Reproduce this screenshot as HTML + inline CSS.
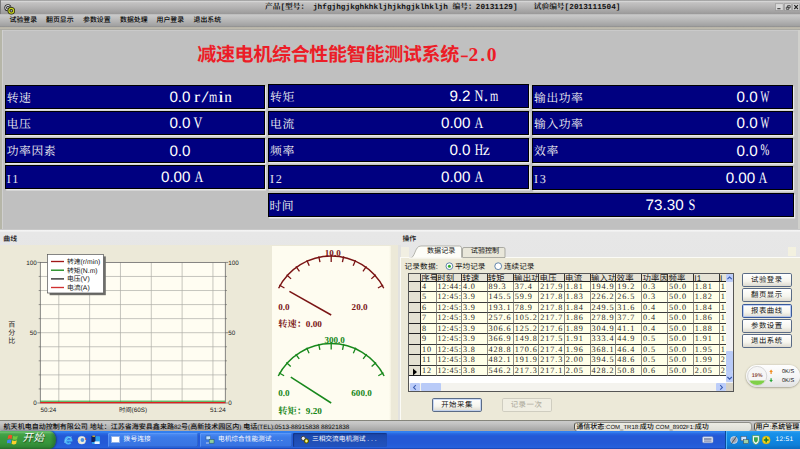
<!DOCTYPE html>
<html lang="zh-CN">
<head>
<meta charset="utf-8">
<title>减速电机综合性能智能测试系统-2.0</title>
<style>
*{box-sizing:border-box;margin:0;padding:0}
html,body{width:800px;height:449px;overflow:hidden;background:#c0c0c0}
body{position:relative;text-rendering:geometricPrecision;font-family:"Liberation Serif","Noto Serif CJK SC",serif;font-size:7px;color:#000}
.abs{position:absolute}
.t{position:absolute;white-space:nowrap;line-height:1}
.song{font-family:"Liberation Serif","Noto Serif CJK SC",serif}
.hei{font-family:"Liberation Sans","Noto Sans CJK SC",sans-serif}
#titlebar{left:0;top:0;width:800px;height:14.4px;border-left:1px solid #7c7c7c;background:linear-gradient(#a4a4a4 0,#a8a8a8 .7px,#d8d8d8 1.1px,#d2d2d2 1.9px,#c3c2c2 2.6px,#b5b4b4 7px,#a2a1a1 12px,#9a9999 13.8px,#a2a2a2 14.4px)}
#menubar{left:0;top:14.4px;width:800px;height:12.8px;background:linear-gradient(#b4b4b4 0,#c9c9c9 1px,#c3c3c3 3px,#b2b2b2 7.500px,#a2a2a2 11.500px,#909090 12.800px)}
#menuline{left:0;top:27.2px;width:800px;height:3.500px;background:linear-gradient(#b2aea2 0,#c2beb0 1.200px,#b0aea6 2.200px,#a8a8a2 2.700px,#cecece 2.900px,#cacaca 3.500px)}
#leftedge{left:0;top:30px;width:2.6px;height:199.500px;background:linear-gradient(90deg,#b6b6a8 0,#b6b6a8 1.800px,#d0d0d0 1.900px,#d0d0d0 2.600px)}
#rightedge{left:798px;top:30px;width:2px;height:200px;background:#d0d0cc}
.menu{top:17.9px;font-size:6.9px;color:#000;font-weight:500;font-family:"Liberation Sans","Noto Sans CJK SC",sans-serif}
.bp{position:absolute;background:#000080;border:1px solid #000;box-shadow:1.200px 1.500px 0 #e9e9e9;height:24.3px}
.bl{position:absolute;left:.8px;top:6.8px;color:#f4f4f4;font-size:11.8px;line-height:1;white-space:nowrap;letter-spacing:.5px}
.bv{position:absolute;top:4.4px;color:#fff;font-family:"Liberation Sans",sans-serif;font-size:15.2px;line-height:1;white-space:nowrap;text-align:right}
.bu{position:absolute;top:4.2px;color:#fff;font-family:"Liberation Serif",serif;font-size:16px;line-height:1;white-space:nowrap}
.bu span{display:inline-block;width:16px;margin:0 -4.1px;text-align:center;transform:scaleX(.77)}

#lowhdr{left:0;top:229.8px;width:800px;height:27.4px;background:linear-gradient(#f5f5f5 0,#f2f2f2 1.2px,#e7e7e7 2.4px,#e6e6e6 27px)}
#lowhdrL{left:0;top:244.5px;width:397.6px;height:1.2px;background:#cbcbc0}
#lowhdrline{left:0;top:229px;width:800px;height:1px;background:#c8c8c8}
#curvebg{left:0;top:245.3px;width:397.6px;height:175px;background:#ece9d8}
#plot{left:40.3px;top:262.4px;width:185px;height:140.6px;background:#fffdf2}
#gaugebg{left:271.5px;top:245.6px;width:119.3px;height:174px;background:linear-gradient(90deg,#fefcf0 0,#fefcf0 117px,#f3f0df 119.3px)}
#midgap{left:397.6px;top:245px;width:3px;height:175px;background:#e2e2e0}
.ax{font-family:"Liberation Sans","Noto Sans CJK SC",sans-serif;font-size:6.6px;color:#222}
.g1{font-family:"Liberation Serif","Noto Serif CJK SC",serif;font-weight:700;font-size:9.1px;color:#7a1616}
.g2{font-family:"Liberation Serif","Noto Serif CJK SC",serif;font-weight:700;font-size:9.1px;color:#168616}


#tabpage{left:400px;top:257px;width:400px;height:163px;background:#ece9d8;border-top:1px solid #fbfbf6;border-left:1px solid #fbfbf6}
.tab{position:absolute;font-family:"Liberation Sans","Noto Sans CJK SC",sans-serif;font-size:7.1px;font-weight:400;color:#111;text-align:center;line-height:1}
#grid{left:408px;top:272.6px;width:325.5px;height:119.3px;background:#fff;border:1px solid #555;overflow:hidden}
.gh{position:absolute;top:0;height:8.4px;background:#e6e3d6;border-right:.9px solid #333;border-bottom:.9px solid #222;font-family:"Liberation Sans","Noto Sans CJK SC",sans-serif;font-size:8.4px;line-height:8.8px;white-space:nowrap;overflow:hidden;font-weight:400;color:#1a1a1a;padding-left:.3px;letter-spacing:.2px}
.gc{position:absolute;height:10.5px;background:#ffffe8;border-right:.8px solid #8c8c86;border-bottom:.9px solid #3a3a3a;font-family:"Liberation Serif",serif;font-size:8.2px;line-height:10.7px;white-space:nowrap;overflow:hidden;color:#2a2a2a;padding-left:.9px;letter-spacing:.92px}
.gi{position:absolute;left:0;width:12px;height:10.5px;background:#e4e1d2;border-right:1px solid #222;border-bottom:1px solid #222}
.btn{position:absolute;width:50px;height:14px;border:1px solid #5a6b86;border-radius:1.8px;background:linear-gradient(#ffffff,#f6f5ee 60%,#dddad0);font-family:"Liberation Sans","Noto Sans CJK SC",sans-serif;font-size:7.4px;font-weight:400;line-height:12px;text-align:center;color:#111;letter-spacing:.5px}


#statusbar{left:0;top:420px;width:800px;height:11.300px;background:linear-gradient(#7e7e74 0,#8a8a82 .9px,#c9c9c9 1.5px,#c4c4c4 3.5px,#b0b0b0 8px,#a6a6a6 10.2px,#beb0a8 11.300px)}
.sp{position:absolute;top:422.1px;height:8.9px;border-left:1px solid #4e4e48;border-top:.6px solid #8e8e88;border-right:.6px solid #9a9a94;border-radius:3.5px;background:linear-gradient(#ecece4,#deded6)}
.st{font-family:"Liberation Sans","Noto Sans CJK SC",sans-serif;font-size:7.02px;color:#0a0a0a;font-weight:500}
.l{font-size:6.35px}
.l2{font-size:6px}
#taskbar{left:0;top:431.3px;width:800px;height:17.7px;background:linear-gradient(#2f7cf0 0,#3484f2 1.2px,#2a68e2 2.6px,#2459d6 5px,#2459d6 12px,#2660dc 16.500px,#1c46b4 17.700px)}
#start{left:0;top:431.3px;width:56px;height:17.7px;border-radius:0 6px 6px 0/0 9px 9px 0;background:linear-gradient(90deg,rgba(0,0,0,0) 0,rgba(0,0,0,0) 50px,rgba(20,70,30,.45) 56px),linear-gradient(#4fae55 0,#6cc070 1.2px,#45a349 3px,#3a9a3e 7px,#37963b 12px,#2f8634 16px,#276e2c 17.700px);box-shadow:1px 0 1.5px #1a3e8a}
.tb{position:absolute;top:432.6px;height:14.6px;border-radius:1.6px;background:linear-gradient(#4f8ff6,#3c7be8 30%,#3773e2);box-shadow:inset .6px .6px 0 #6aa2fa,inset -.6px -.6px 0 #2a5cc0}
.tba{background:linear-gradient(#1a44a6,#1e4cb4 40%,#2253be);box-shadow:inset .8px .8px 1px #12317e}
.tt{font-family:"Liberation Sans","Noto Sans CJK SC",sans-serif;font-size:6.7px;color:#fff}
#tray{left:724.5px;top:431px;width:75.5px;height:18px;background:linear-gradient(#3aa4f4 0,#1a92ea 2px,#1188e4 8px,#0f7fd8 14px,#0c6cc0 18px);border-left:1px solid #0b4a9a;box-shadow:inset 1px 0 0 #4fb4f8}

</style>
</head>
<body>
<div id="titlebar" class="abs"></div>
<div id="menubar" class="abs"></div>
<div id="menuline" class="abs"></div>
<div id="leftedge" class="abs"></div>
<div id="rightedge" class="abs"></div>
<svg class="abs" style="left:4.4px;top:3.8px" width="12" height="11" viewBox="0 0 12 11">
<circle cx="3.9" cy="3.7" r="2.3" fill="none" stroke="#2a2a2a" stroke-width="2.5"/><circle cx="3.9" cy="3.7" r="2.3" fill="none" stroke="#e6e6e6" stroke-width="1"/>
<circle cx="7.300" cy="6.700" r="2.400" fill="none" stroke="#26260a" stroke-width="2.700"/><circle cx="7.300" cy="6.700" r="2.400" fill="none" stroke="#c6d422" stroke-width="1.200"/>
<path d="M5.200 2.200l1.300 1.700" stroke="#4a4a4a" stroke-width=".8"/>
</svg>
<div class="t" id="titletext" style="left:265px;top:5.2px;font-family:'Liberation Mono','Noto Serif CJK SC',monospace;font-size:7.7px;font-weight:700;color:#111;letter-spacing:.04px">产品[型号： jhfgjhgjkghkhkljhjkhgjklhkljh 编号：20131129]</div>
<div class="t" id="titletext2" style="left:533.7px;top:5.2px;font-family:'Liberation Mono','Noto Serif CJK SC',monospace;font-size:7.7px;font-weight:700;color:#111;letter-spacing:.04px">试验编号[2013111504]</div>
<svg class="abs" style="left:775px;top:3px" width="25" height="8" viewBox="775 3 25 8">
<rect x="775.700" y="3.800" width="7.400" height="6.400" fill="#dadada" stroke="#8e8e8e" stroke-width=".5"/><rect x="784.700" y="3.800" width="6.800" height="6.400" fill="#d4d4d4" stroke="#8e8e8e" stroke-width=".5"/><rect x="792.800" y="3.800" width="6.400" height="6.400" fill="#d4d4d4" stroke="#8e8e8e" stroke-width=".5"/>
<path d="M777.300 8.700h3.200" stroke="#333" stroke-width="1.100"/><path d="M787.600 5.600h2.600v2.200h-2.600zM786.300 7.100h2.600v2.200h-2.600z" fill="none" stroke="#333" stroke-width=".8"/><path d="M794.300 5.200l3.600 3.800M797.900 5.200l-3.600 3.800" stroke="#222" stroke-width="1.100"/></svg>
<div class="t menu song" style="left:9.5px">试验登录</div>
<div class="t menu song" style="left:46px">翻页显示</div>
<div class="t menu song" style="left:83px">参数设置</div>
<div class="t menu song" style="left:120px">数据处理</div>
<div class="t menu song" style="left:156.5px">用户登录</div>
<div class="t menu song" style="left:193.5px">退出系统</div>
<div class="t hei" id="heading" style="left:197.2px;top:45.9px;font-size:19.1px;font-weight:700;color:#ec1d27;letter-spacing:-.4px">减速电机综合性能智能测试系统<span style="font-family:'Liberation Serif',serif;font-size:19.6px;letter-spacing:-.45px"><span style="display:inline-block;transform:scaleX(1.35);margin:0 1.6px 0 1.9px">-</span>2<span style="margin:0 2.2px 0 2.4px">.</span>0</span></div>
<div class="bp" style="left:5px;top:84.8px;width:260.4px"><div class="bl song">转速</div><div class="bv" style="right:73.89999999999998px">0.0</div><div class="bu" style="left:187.3px"><span style="transform:scaleX(1.15)">r</span><span style="transform:scaleX(1.6)">/</span><span style="transform:scaleX(0.66)">m</span><span style="transform:scaleX(1.45)">i</span><span style="transform:scaleX(0.95)">n</span></div></div>
<div class="bp" style="left:268.3px;top:84.0px;width:260.6px"><div class="bl song">转矩</div><div class="bv" style="right:57.40000000000009px">9.2</div><div class="bu" style="left:205.3px"><span style="transform:scaleX(0.76)">N</span><span style="transform:scaleX(1.1)">.</span><span style="transform:scaleX(0.66)">m</span></div></div>
<div class="bp" style="left:532.3px;top:84.8px;width:260.4px"><div class="bl song">输出功率</div><div class="bv" style="right:34.09999999999991px">0.0</div><div class="bu" style="left:228.0px"><span style="transform:scaleX(0.58)">W</span></div></div>
<div class="bp" style="left:5px;top:111.1px;width:260.4px"><div class="bl song">电压</div><div class="bv" style="right:73.89999999999998px">0.0</div><div class="bu" style="left:188.0px"><span style="transform:scaleX(0.76)">V</span></div></div>
<div class="bp" style="left:268.3px;top:111.1px;width:260.6px"><div class="bl song">电流</div><div class="bv" style="right:57.40000000000009px">0.00</div><div class="bu" style="left:205.9px"><span style="transform:scaleX(0.76)">A</span></div></div>
<div class="bp" style="left:532.3px;top:111.1px;width:260.4px"><div class="bl song">输入功率</div><div class="bv" style="right:34.09999999999991px">0.0</div><div class="bu" style="left:228.0px"><span style="transform:scaleX(0.58)">W</span></div></div>
<div class="bp" style="left:5px;top:138.3px;width:260.4px"><div class="bl song">功率因素</div><div class="bv" style="right:73.89999999999998px">0.0</div></div>
<div class="bp" style="left:268.3px;top:137.8px;width:260.6px"><div class="bl song">频率</div><div class="bv" style="right:57.40000000000009px">0.0</div><div class="bu" style="left:205.3px"><span style="transform:scaleX(0.72)">H</span><span style="transform:scaleX(1.0)">z</span></div></div>
<div class="bp" style="left:532.3px;top:138.3px;width:260.4px"><div class="bl song">效率</div><div class="bv" style="right:34.09999999999991px">0.0</div><div class="bu" style="left:228.0px"><span style="transform:scaleX(0.66)">%</span></div></div>
<div class="bp" style="left:5px;top:165.0px;width:260.4px"><div class="bl song" style="letter-spacing:1.5px;font-size:12.2px;color:#e4e4ec">I1</div><div class="bv" style="right:73.89999999999998px">0.00</div><div class="bu" style="left:189.0px"><span style="transform:scaleX(0.76)">A</span></div></div>
<div class="bp" style="left:268.3px;top:165.0px;width:260.6px"><div class="bl song" style="letter-spacing:1.5px;font-size:12.2px;color:#e4e4ec">I2</div><div class="bv" style="right:57.40000000000009px">0.00</div><div class="bu" style="left:205.9px"><span style="transform:scaleX(0.76)">A</span></div></div>
<div class="bp" style="left:532.3px;top:165.6px;width:260.4px"><div class="bl song" style="letter-spacing:1.5px;font-size:12.2px;color:#e4e4ec">I3</div><div class="bv" style="right:36.499999999999886px">0.00</div><div class="bu" style="left:225.7px"><span style="transform:scaleX(0.76)">A</span></div></div>
<div class="bp" style="left:267.6px;top:192.9px;width:526px"><div class="bl song">时间</div><div class="bv" style="right:109px">73.30</div><div class="bu" style="left:419.8px"><span>S</span></div></div>
<div id="lowhdrline" class="abs"></div><div id="lowhdr" class="abs"></div><div id="lowhdrL" class="abs"></div>
<div id="curvebg" class="abs"></div><div id="midgap" class="abs"></div>
<div class="t hei" style="left:3.3px;top:236.5px;font-size:6.9px;font-weight:500;color:#111">曲线</div>
<div class="t hei" style="left:402.4px;top:236.7px;font-size:6.9px;font-weight:500;color:#111">操作</div>
<svg class="abs" style="left:0;top:245px" width="270" height="175" viewBox="0 245 270 175">
<rect x="40.3" y="262.4" width="185.0" height="140.6" fill="#fffdf2"/>
<line x1="40.3" y1="276.46" x2="225.3" y2="276.46" stroke="#aeaea8" stroke-width=".7"/>
<line x1="40.3" y1="290.52" x2="225.3" y2="290.52" stroke="#aeaea8" stroke-width=".7"/>
<line x1="40.3" y1="304.58" x2="225.3" y2="304.58" stroke="#aeaea8" stroke-width=".7"/>
<line x1="40.3" y1="318.64" x2="225.3" y2="318.64" stroke="#aeaea8" stroke-width=".7"/>
<line x1="40.3" y1="332.70" x2="225.3" y2="332.70" stroke="#aeaea8" stroke-width=".7"/>
<line x1="40.3" y1="346.76" x2="225.3" y2="346.76" stroke="#aeaea8" stroke-width=".7"/>
<line x1="40.3" y1="360.82" x2="225.3" y2="360.82" stroke="#aeaea8" stroke-width=".7"/>
<line x1="40.3" y1="374.88" x2="225.3" y2="374.88" stroke="#aeaea8" stroke-width=".7"/>
<line x1="40.3" y1="388.94" x2="225.3" y2="388.94" stroke="#aeaea8" stroke-width=".7"/>
<line x1="58.80" y1="262.4" x2="58.80" y2="403.0" stroke="#aeaea8" stroke-width=".7"/>
<line x1="89.63" y1="262.4" x2="89.63" y2="403.0" stroke="#aeaea8" stroke-width=".7"/>
<line x1="120.46" y1="262.4" x2="120.46" y2="403.0" stroke="#aeaea8" stroke-width=".7"/>
<line x1="151.29" y1="262.4" x2="151.29" y2="403.0" stroke="#aeaea8" stroke-width=".7"/>
<line x1="182.12" y1="262.4" x2="182.12" y2="403.0" stroke="#aeaea8" stroke-width=".7"/>
<line x1="212.95" y1="262.4" x2="212.95" y2="403.0" stroke="#aeaea8" stroke-width=".7"/>
<rect x="40.3" y="262.4" width="185.0" height="140.6" fill="none" stroke="#6a6a6a" stroke-width=".8"/>
<line x1="37.3" y1="262.40" x2="40.3" y2="262.40" stroke="#555" stroke-width=".6"/>
<line x1="225.3" y1="262.40" x2="228.3" y2="262.40" stroke="#555" stroke-width=".6"/>
<line x1="38.699999999999996" y1="276.46" x2="40.3" y2="276.46" stroke="#555" stroke-width=".6"/>
<line x1="225.3" y1="276.46" x2="226.9" y2="276.46" stroke="#555" stroke-width=".6"/>
<line x1="38.699999999999996" y1="290.52" x2="40.3" y2="290.52" stroke="#555" stroke-width=".6"/>
<line x1="225.3" y1="290.52" x2="226.9" y2="290.52" stroke="#555" stroke-width=".6"/>
<line x1="38.699999999999996" y1="304.58" x2="40.3" y2="304.58" stroke="#555" stroke-width=".6"/>
<line x1="225.3" y1="304.58" x2="226.9" y2="304.58" stroke="#555" stroke-width=".6"/>
<line x1="38.699999999999996" y1="318.64" x2="40.3" y2="318.64" stroke="#555" stroke-width=".6"/>
<line x1="225.3" y1="318.64" x2="226.9" y2="318.64" stroke="#555" stroke-width=".6"/>
<line x1="37.3" y1="332.70" x2="40.3" y2="332.70" stroke="#555" stroke-width=".6"/>
<line x1="225.3" y1="332.70" x2="228.3" y2="332.70" stroke="#555" stroke-width=".6"/>
<line x1="38.699999999999996" y1="346.76" x2="40.3" y2="346.76" stroke="#555" stroke-width=".6"/>
<line x1="225.3" y1="346.76" x2="226.9" y2="346.76" stroke="#555" stroke-width=".6"/>
<line x1="38.699999999999996" y1="360.82" x2="40.3" y2="360.82" stroke="#555" stroke-width=".6"/>
<line x1="225.3" y1="360.82" x2="226.9" y2="360.82" stroke="#555" stroke-width=".6"/>
<line x1="38.699999999999996" y1="374.88" x2="40.3" y2="374.88" stroke="#555" stroke-width=".6"/>
<line x1="225.3" y1="374.88" x2="226.9" y2="374.88" stroke="#555" stroke-width=".6"/>
<line x1="38.699999999999996" y1="388.94" x2="40.3" y2="388.94" stroke="#555" stroke-width=".6"/>
<line x1="225.3" y1="388.94" x2="226.9" y2="388.94" stroke="#555" stroke-width=".6"/>
<line x1="37.3" y1="403.00" x2="40.3" y2="403.00" stroke="#555" stroke-width=".6"/>
<line x1="225.3" y1="403.00" x2="228.3" y2="403.00" stroke="#555" stroke-width=".6"/>
<line x1="40.3" y1="401.2" x2="225.3" y2="401.2" stroke="#1f9a2a" stroke-width="1"/>
<line x1="40.3" y1="402.6" x2="225.3" y2="402.6" stroke="#e02020" stroke-width="1.1"/>
<rect x="49.600" y="256.400" width="56.200" height="38.800" fill="#6e6e6a"/>
<rect x="47.400" y="254.400" width="56.100" height="38.600" fill="#fff" stroke="#555" stroke-width=".7"/>
<line x1="51" y1="261.5" x2="64" y2="261.5" stroke="#a01818" stroke-width="1.35"/>
<text x="67" y="263.9" font-family="Liberation Sans,Noto Sans CJK SC,sans-serif" font-size="6.8" fill="#111">转速(r/min)</text>
<line x1="51" y1="270.2" x2="64" y2="270.2" stroke="#1a8a1a" stroke-width="1.35"/>
<text x="67" y="272.6" font-family="Liberation Sans,Noto Sans CJK SC,sans-serif" font-size="6.8" fill="#111">转矩(N.m)</text>
<line x1="51" y1="278.9" x2="64" y2="278.9" stroke="#2a2a2a" stroke-width="1.35"/>
<text x="67" y="281.3" font-family="Liberation Sans,Noto Sans CJK SC,sans-serif" font-size="6.8" fill="#111">电压(V)</text>
<line x1="51" y1="287.5" x2="64" y2="287.5" stroke="#d03030" stroke-width="1.35"/>
<text x="67" y="289.9" font-family="Liberation Sans,Noto Sans CJK SC,sans-serif" font-size="6.8" fill="#111">电流(A)</text>
<text x="36.8" y="264.8" text-anchor="end" font-family="Liberation Sans,Noto Sans CJK SC,sans-serif" font-size="6.3" fill="#222">100</text>
<text x="36.8" y="335.1" text-anchor="end" font-family="Liberation Sans,Noto Sans CJK SC,sans-serif" font-size="6.3" fill="#222">50</text>
<text x="36.8" y="405.4" text-anchor="end" font-family="Liberation Sans,Noto Sans CJK SC,sans-serif" font-size="6.3" fill="#222">0</text>
<text x="228.3" y="264.8" text-anchor="start" font-family="Liberation Sans,Noto Sans CJK SC,sans-serif" font-size="6.3" fill="#222">100</text>
<text x="228.3" y="335.1" text-anchor="start" font-family="Liberation Sans,Noto Sans CJK SC,sans-serif" font-size="6.3" fill="#222">50</text>
<text x="228.3" y="405.4" text-anchor="start" font-family="Liberation Sans,Noto Sans CJK SC,sans-serif" font-size="6.3" fill="#222">0</text>
<text x="40.5" y="412.4" text-anchor="start" font-family="Liberation Sans,Noto Sans CJK SC,sans-serif" font-size="6.3" fill="#222">50:24</text>
<text x="210" y="412.4" text-anchor="start" font-family="Liberation Sans,Noto Sans CJK SC,sans-serif" font-size="6.3" fill="#222">51:24</text>
<text x="133" y="412.4" text-anchor="middle" font-family="Liberation Sans,Noto Sans CJK SC,sans-serif" font-size="6.3" fill="#222">时间(60S)</text>
<text x="8.3" y="327" font-family="Liberation Sans,Noto Sans CJK SC,sans-serif" font-size="7" fill="#222">百<tspan x="8.3" dy="8.2">分</tspan><tspan x="8.3" dy="8.2">比</tspan></text>
</svg>
<div id="gaugebg" class="abs"></div>
<svg class="abs" style="left:271px;top:245.3px" width="121" height="100" viewBox="271 245.3 121 100">
<path d="M278.63 288.51A59 59 0 0 1 383.77 288.51" fill="none" stroke="#7a1414" stroke-width="1.45"/>
<line x1="279.24" y1="285.30" x2="284.43" y2="288.30" stroke="#7a1414" stroke-width="1.3"/>
<line x1="286.61" y1="275.15" x2="291.07" y2="279.17" stroke="#7a1414" stroke-width="1.3"/>
<line x1="295.93" y1="266.76" x2="299.46" y2="271.61" stroke="#7a1414" stroke-width="1.3"/>
<line x1="306.80" y1="260.49" x2="309.24" y2="265.97" stroke="#7a1414" stroke-width="1.3"/>
<line x1="318.73" y1="256.61" x2="319.97" y2="262.48" stroke="#7a1414" stroke-width="1.3"/>
<line x1="331.20" y1="254.80" x2="331.20" y2="262.30" stroke="#7a1414" stroke-width="1.3"/>
<line x1="343.67" y1="256.61" x2="342.43" y2="262.48" stroke="#7a1414" stroke-width="1.3"/>
<line x1="355.60" y1="260.49" x2="353.16" y2="265.97" stroke="#7a1414" stroke-width="1.3"/>
<line x1="366.47" y1="266.76" x2="362.94" y2="271.61" stroke="#7a1414" stroke-width="1.3"/>
<line x1="375.79" y1="275.15" x2="371.33" y2="279.17" stroke="#7a1414" stroke-width="1.3"/>
<line x1="383.16" y1="285.30" x2="377.97" y2="288.30" stroke="#7a1414" stroke-width="1.3"/>
<line x1="331.20" y1="315.30" x2="289.42" y2="291.66" stroke="#7a1414" stroke-width="1.5"/>
</svg>
<svg class="abs" style="left:271px;top:332.8px" width="121" height="100" viewBox="271 332.8 121 100">
<path d="M278.27 375.83A59.4 59.4 0 0 1 384.13 375.83" fill="none" stroke="#18881c" stroke-width="1.45"/>
<line x1="278.89" y1="372.60" x2="284.09" y2="375.60" stroke="#18881c" stroke-width="1.3"/>
<line x1="286.31" y1="362.38" x2="290.77" y2="366.40" stroke="#18881c" stroke-width="1.3"/>
<line x1="295.70" y1="353.94" x2="299.22" y2="358.79" stroke="#18881c" stroke-width="1.3"/>
<line x1="306.63" y1="347.62" x2="309.07" y2="353.10" stroke="#18881c" stroke-width="1.3"/>
<line x1="318.64" y1="343.72" x2="319.89" y2="349.59" stroke="#18881c" stroke-width="1.3"/>
<line x1="331.20" y1="341.90" x2="331.20" y2="349.40" stroke="#18881c" stroke-width="1.3"/>
<line x1="343.76" y1="343.72" x2="342.51" y2="349.59" stroke="#18881c" stroke-width="1.3"/>
<line x1="355.77" y1="347.62" x2="353.33" y2="353.10" stroke="#18881c" stroke-width="1.3"/>
<line x1="366.70" y1="353.94" x2="363.18" y2="358.79" stroke="#18881c" stroke-width="1.3"/>
<line x1="376.09" y1="362.38" x2="371.63" y2="366.40" stroke="#18881c" stroke-width="1.3"/>
<line x1="383.51" y1="372.60" x2="378.31" y2="375.60" stroke="#18881c" stroke-width="1.3"/>
<line x1="331.20" y1="402.80" x2="290.81" y2="376.87" stroke="#18881c" stroke-width="1.5"/>
</svg>
<div class="t g1" style="left:324.8px;top:248.9px">10.0</div><div class="t g1" style="left:278.2px;top:302.6px">0.0</div><div class="t g1" style="left:351.6px;top:302.6px">20.0</div><div class="t g1" style="left:278.3px;top:320.3px;font-size:9.2px">转速：0.00</div>
<div class="t g2" style="left:324.4px;top:335.9px">300.0</div><div class="t g2" style="left:278.2px;top:389.3px">0.0</div><div class="t g2" style="left:351.3px;top:389.3px">600.0</div><div class="t g2" style="left:278.3px;top:406.9px;font-size:9.2px">转矩：9.20</div>
<div id="tabpage" class="abs"></div>
<svg class="abs" style="left:405px;top:245px" width="105" height="14" viewBox="405 245 105 14"><path d="M462.5 257.5V249q0-1.5 1.5-1.5H503.5q1.5 0 1.5 1.5V257.5Z" fill="#e9e7da" stroke="#8f8f86" stroke-width=".7"/><path d="M409 258.5C416 258.5 414 246 421 246H459.5q2 0 2 2V258.5Z" fill="#fdfdf8" stroke="#9a9a90" stroke-width=".7"/><rect x="409" y="257.6" width="53.2" height="1.6" fill="#f4f3ea"/></svg>
<div class="abs" style="left:400.5px;top:246.5px;width:8px;height:10.5px;background:#f1efe2"></div>
<div class="tab" style="left:421.2px;top:247.8px;width:40px">数据记录</div><div class="tab" style="left:465px;top:248.4px;width:40px">试验控制</div>
<div class="abs" style="left:788px;top:247px;width:8px;height:9px;background:#f3f1e0"></div>
<div class="t hei" style="left:404.5px;top:262.6px;font-size:7.6px;color:#111;letter-spacing:.2px">记录数据:</div>
<svg class="abs" style="left:444px;top:261px" width="60" height="11" viewBox="444 261 60 11"><circle cx="449.4" cy="266.2" r="3.4" fill="#fff" stroke="#3c6a9a" stroke-width=".8"/><circle cx="449.4" cy="266.2" r="1.5" fill="#2faa2a"/><circle cx="498.2" cy="266.2" r="3.4" fill="#fff" stroke="#3c6a9a" stroke-width=".8"/></svg>
<div class="t hei" style="left:455px;top:262.6px;font-size:7.6px;color:#111">平均记录</div><div class="t hei" style="left:504px;top:262.6px;font-size:7.6px;color:#111">连续记录</div>
<div id="grid" class="abs">
<div class="gh" style="left:0;width:12px"></div>
<div class="gh" style="left:12px;width:16.0px">序号</div>
<div class="gh" style="left:28px;width:25.0px">时刻</div>
<div class="gh" style="left:53px;width:25.5px">转速</div>
<div class="gh" style="left:78.5px;width:26.3px">转矩</div>
<div class="gh" style="left:104.8px;width:25.5px">输出功</div>
<div class="gh" style="left:130.3px;width:25.5px">电压</div>
<div class="gh" style="left:155.8px;width:25.8px">电流</div>
<div class="gh" style="left:181.6px;width:25.7px">输入功</div>
<div class="gh" style="left:207.3px;width:25.9px">效率</div>
<div class="gh" style="left:233.2px;width:26.0px">功率因</div>
<div class="gh" style="left:259.2px;width:25.7px">频率</div>
<div class="gh" style="left:284.9px;width:25.9px">I1</div>
<div class="gh" style="left:310.8px;width:6.8px">I</div>
<div class="gi" style="top:8.4px"></div>
<div class="gc" style="top:8.4px;left:12px;width:16.0px">4</div>
<div class="gc" style="top:8.4px;left:28px;width:25.0px;letter-spacing:.5px;padding-left:.5px">12:44:</div>
<div class="gc" style="top:8.4px;left:53px;width:25.5px">4.0</div>
<div class="gc" style="top:8.4px;left:78.5px;width:26.3px">89.3</div>
<div class="gc" style="top:8.4px;left:104.8px;width:25.5px">37.4</div>
<div class="gc" style="top:8.4px;left:130.3px;width:25.5px">217.9</div>
<div class="gc" style="top:8.4px;left:155.8px;width:25.8px">1.81</div>
<div class="gc" style="top:8.4px;left:181.6px;width:25.7px">194.9</div>
<div class="gc" style="top:8.4px;left:207.3px;width:25.9px">19.2</div>
<div class="gc" style="top:8.4px;left:233.2px;width:26.0px">0.3</div>
<div class="gc" style="top:8.4px;left:259.2px;width:25.7px">50.0</div>
<div class="gc" style="top:8.4px;left:284.9px;width:25.9px">1.81</div>
<div class="gc" style="top:8.4px;left:310.8px;width:6.8px">1</div>
<div class="gi" style="top:18.9px"></div>
<div class="gc" style="top:18.9px;left:12px;width:16.0px">5</div>
<div class="gc" style="top:18.9px;left:28px;width:25.0px;letter-spacing:.5px;padding-left:.5px">12:45:</div>
<div class="gc" style="top:18.9px;left:53px;width:25.5px">3.9</div>
<div class="gc" style="top:18.9px;left:78.5px;width:26.3px">145.5</div>
<div class="gc" style="top:18.9px;left:104.8px;width:25.5px">59.9</div>
<div class="gc" style="top:18.9px;left:130.3px;width:25.5px">217.8</div>
<div class="gc" style="top:18.9px;left:155.8px;width:25.8px">1.83</div>
<div class="gc" style="top:18.9px;left:181.6px;width:25.7px">226.2</div>
<div class="gc" style="top:18.9px;left:207.3px;width:25.9px">26.5</div>
<div class="gc" style="top:18.9px;left:233.2px;width:26.0px">0.3</div>
<div class="gc" style="top:18.9px;left:259.2px;width:25.7px">50.0</div>
<div class="gc" style="top:18.9px;left:284.9px;width:25.9px">1.82</div>
<div class="gc" style="top:18.9px;left:310.8px;width:6.8px">1</div>
<div class="gi" style="top:29.4px"></div>
<div class="gc" style="top:29.4px;left:12px;width:16.0px">6</div>
<div class="gc" style="top:29.4px;left:28px;width:25.0px;letter-spacing:.5px;padding-left:.5px">12:45:</div>
<div class="gc" style="top:29.4px;left:53px;width:25.5px">3.9</div>
<div class="gc" style="top:29.4px;left:78.5px;width:26.3px">193.1</div>
<div class="gc" style="top:29.4px;left:104.8px;width:25.5px">78.9</div>
<div class="gc" style="top:29.4px;left:130.3px;width:25.5px">217.8</div>
<div class="gc" style="top:29.4px;left:155.8px;width:25.8px">1.84</div>
<div class="gc" style="top:29.4px;left:181.6px;width:25.7px">249.5</div>
<div class="gc" style="top:29.4px;left:207.3px;width:25.9px">31.6</div>
<div class="gc" style="top:29.4px;left:233.2px;width:26.0px">0.4</div>
<div class="gc" style="top:29.4px;left:259.2px;width:25.7px">50.0</div>
<div class="gc" style="top:29.4px;left:284.9px;width:25.9px">1.84</div>
<div class="gc" style="top:29.4px;left:310.8px;width:6.8px">1</div>
<div class="gi" style="top:39.9px"></div>
<div class="gc" style="top:39.9px;left:12px;width:16.0px">7</div>
<div class="gc" style="top:39.9px;left:28px;width:25.0px;letter-spacing:.5px;padding-left:.5px">12:45:</div>
<div class="gc" style="top:39.9px;left:53px;width:25.5px">3.9</div>
<div class="gc" style="top:39.9px;left:78.5px;width:26.3px">257.6</div>
<div class="gc" style="top:39.9px;left:104.8px;width:25.5px">105.2</div>
<div class="gc" style="top:39.9px;left:130.3px;width:25.5px">217.7</div>
<div class="gc" style="top:39.9px;left:155.8px;width:25.8px">1.86</div>
<div class="gc" style="top:39.9px;left:181.6px;width:25.7px">278.9</div>
<div class="gc" style="top:39.9px;left:207.3px;width:25.9px">37.7</div>
<div class="gc" style="top:39.9px;left:233.2px;width:26.0px">0.4</div>
<div class="gc" style="top:39.9px;left:259.2px;width:25.7px">50.0</div>
<div class="gc" style="top:39.9px;left:284.9px;width:25.9px">1.86</div>
<div class="gc" style="top:39.9px;left:310.8px;width:6.8px">1</div>
<div class="gi" style="top:50.4px"></div>
<div class="gc" style="top:50.4px;left:12px;width:16.0px">8</div>
<div class="gc" style="top:50.4px;left:28px;width:25.0px;letter-spacing:.5px;padding-left:.5px">12:45:</div>
<div class="gc" style="top:50.4px;left:53px;width:25.5px">3.9</div>
<div class="gc" style="top:50.4px;left:78.5px;width:26.3px">306.6</div>
<div class="gc" style="top:50.4px;left:104.8px;width:25.5px">125.2</div>
<div class="gc" style="top:50.4px;left:130.3px;width:25.5px">217.6</div>
<div class="gc" style="top:50.4px;left:155.8px;width:25.8px">1.89</div>
<div class="gc" style="top:50.4px;left:181.6px;width:25.7px">304.9</div>
<div class="gc" style="top:50.4px;left:207.3px;width:25.9px">41.1</div>
<div class="gc" style="top:50.4px;left:233.2px;width:26.0px">0.4</div>
<div class="gc" style="top:50.4px;left:259.2px;width:25.7px">50.0</div>
<div class="gc" style="top:50.4px;left:284.9px;width:25.9px">1.88</div>
<div class="gc" style="top:50.4px;left:310.8px;width:6.8px">1</div>
<div class="gi" style="top:60.9px"></div>
<div class="gc" style="top:60.9px;left:12px;width:16.0px">9</div>
<div class="gc" style="top:60.9px;left:28px;width:25.0px;letter-spacing:.5px;padding-left:.5px">12:45:</div>
<div class="gc" style="top:60.9px;left:53px;width:25.5px">3.9</div>
<div class="gc" style="top:60.9px;left:78.5px;width:26.3px">366.9</div>
<div class="gc" style="top:60.9px;left:104.8px;width:25.5px">149.8</div>
<div class="gc" style="top:60.9px;left:130.3px;width:25.5px">217.5</div>
<div class="gc" style="top:60.9px;left:155.8px;width:25.8px">1.91</div>
<div class="gc" style="top:60.9px;left:181.6px;width:25.7px">333.4</div>
<div class="gc" style="top:60.9px;left:207.3px;width:25.9px">44.9</div>
<div class="gc" style="top:60.9px;left:233.2px;width:26.0px">0.5</div>
<div class="gc" style="top:60.9px;left:259.2px;width:25.7px">50.0</div>
<div class="gc" style="top:60.9px;left:284.9px;width:25.9px">1.91</div>
<div class="gc" style="top:60.9px;left:310.8px;width:6.8px">1</div>
<div class="gi" style="top:71.4px"></div>
<div class="gc" style="top:71.4px;left:12px;width:16.0px">10</div>
<div class="gc" style="top:71.4px;left:28px;width:25.0px;letter-spacing:.5px;padding-left:.5px">12:45:</div>
<div class="gc" style="top:71.4px;left:53px;width:25.5px">3.8</div>
<div class="gc" style="top:71.4px;left:78.5px;width:26.3px">428.8</div>
<div class="gc" style="top:71.4px;left:104.8px;width:25.5px">170.6</div>
<div class="gc" style="top:71.4px;left:130.3px;width:25.5px">217.4</div>
<div class="gc" style="top:71.4px;left:155.8px;width:25.8px">1.96</div>
<div class="gc" style="top:71.4px;left:181.6px;width:25.7px">368.1</div>
<div class="gc" style="top:71.4px;left:207.3px;width:25.9px">46.4</div>
<div class="gc" style="top:71.4px;left:233.2px;width:26.0px">0.5</div>
<div class="gc" style="top:71.4px;left:259.2px;width:25.7px">50.0</div>
<div class="gc" style="top:71.4px;left:284.9px;width:25.9px">1.95</div>
<div class="gc" style="top:71.4px;left:310.8px;width:6.8px">1</div>
<div class="gi" style="top:81.9px"></div>
<div class="gc" style="top:81.9px;left:12px;width:16.0px">11</div>
<div class="gc" style="top:81.9px;left:28px;width:25.0px;letter-spacing:.5px;padding-left:.5px">12:45:</div>
<div class="gc" style="top:81.9px;left:53px;width:25.5px">3.8</div>
<div class="gc" style="top:81.9px;left:78.5px;width:26.3px">482.1</div>
<div class="gc" style="top:81.9px;left:104.8px;width:25.5px">191.9</div>
<div class="gc" style="top:81.9px;left:130.3px;width:25.5px">217.3</div>
<div class="gc" style="top:81.9px;left:155.8px;width:25.8px">2.00</div>
<div class="gc" style="top:81.9px;left:181.6px;width:25.7px">394.5</div>
<div class="gc" style="top:81.9px;left:207.3px;width:25.9px">48.6</div>
<div class="gc" style="top:81.9px;left:233.2px;width:26.0px">0.5</div>
<div class="gc" style="top:81.9px;left:259.2px;width:25.7px">50.0</div>
<div class="gc" style="top:81.9px;left:284.9px;width:25.9px">1.99</div>
<div class="gc" style="top:81.9px;left:310.8px;width:6.8px">2</div>
<div class="gi" style="top:92.4px"></div>
<div class="gc" style="top:92.4px;left:12px;width:16.0px">12</div>
<div class="gc" style="top:92.4px;left:28px;width:25.0px;letter-spacing:.5px;padding-left:.5px">12:45:</div>
<div class="gc" style="top:92.4px;left:53px;width:25.5px">3.8</div>
<div class="gc" style="top:92.4px;left:78.5px;width:26.3px">546.2</div>
<div class="gc" style="top:92.4px;left:104.8px;width:25.5px">217.3</div>
<div class="gc" style="top:92.4px;left:130.3px;width:25.5px">217.1</div>
<div class="gc" style="top:92.4px;left:155.8px;width:25.8px">2.05</div>
<div class="gc" style="top:92.4px;left:181.6px;width:25.7px">428.2</div>
<div class="gc" style="top:92.4px;left:207.3px;width:25.9px">50.8</div>
<div class="gc" style="top:92.4px;left:233.2px;width:26.0px">0.6</div>
<div class="gc" style="top:92.4px;left:259.2px;width:25.7px">50.0</div>
<div class="gc" style="top:92.4px;left:284.9px;width:25.9px">2.05</div>
<div class="gc" style="top:92.4px;left:310.8px;width:6.8px">2</div>
<svg class="abs" style="left:2.6px;top:94.3px" width="6" height="8" viewBox="0 0 6 8"><path d="M1 .6L5 4 1 7.4Z" fill="#000"/></svg>
<div class="abs" style="left:316.8px;top:0;width:7.800px;height:109px;background:#f2f2f4"></div>
<div class="abs" style="left:316.8px;top:0;width:7.700px;height:8.4px;background:#bccdf9;border-radius:1px"></div>
<div class="abs" style="left:316.8px;top:77.4px;width:7.700px;height:21px;background:#b9cbf8;border-radius:1px"></div>
<div class="abs" style="left:316.8px;top:98.6px;width:7.700px;height:10px;background:#bccdf9;border-radius:1px"></div>
<div class="abs" style="left:0;top:109px;width:324.6px;height:8.8px;background:#f4f3ee"></div>
<div class="abs" style="left:.6px;top:109.3px;width:10.6px;height:8.2px;background:#bccdf9;border-radius:1px"></div>
<div class="abs" style="left:12.4px;top:109.3px;width:19.8px;height:8.2px;background:#b9cbf8;border-radius:1px"></div>
<div class="abs" style="left:307.200px;top:109.3px;width:9.500px;height:8.2px;background:#bccdf9;border-radius:1px"></div>
<div class="abs" style="left:316.8px;top:109px;width:7.800px;height:8.8px;background:#d6d2c6"></div>
<svg class="abs" style="left:0;top:0" width="325" height="118" viewBox="0 0 325 118" fill="none" stroke="#3a5cb0" stroke-width="1.1"><path d="M318.4 5.2l2.2-2.2 2.2 2.2"/><path d="M318.4 103l2.2 2.2 2.2-2.2"/><path d="M6.8 111.200l-2.200 2.200 2.200 2.200"/><path d="M311.200 111.200l2.200 2.200-2.200 2.200"/></svg>
</div>
<div class="btn" style="left:741.8px;top:273.0px">试验登录</div>
<div class="btn" style="left:741.8px;top:288.3px">翻页显示</div>
<div class="btn" style="left:741.8px;top:303.6px;border-color:#3a5a9a;box-shadow:inset 0 0 0 .8px #aac0f0">报表曲线</div>
<div class="btn" style="left:741.8px;top:318.9px">参数设置</div>
<div class="btn" style="left:741.8px;top:334.2px">退出系统</div>
<div class="btn" style="left:432px;top:398.3px;box-shadow:inset 0 0 0 .8px #b8cdf4">开始采集</div>
<div class="btn" style="left:501.5px;top:398.3px;color:#b4b1a4;border-color:#cfcdc0;background:#f0eee2;font-weight:500">记录一次</div>
<div id="statusbar" class="abs"></div>
<div class="t st" style="left:3.6px;top:423.5px">航天机电自动控制有限公司 地址：江苏省海安县鑫来路<span class="l">82</span>号<span class="l">(</span>高新技术园区内<span class="l">) </span>电话<span class="l">(TEL):0513-88915838 88921838</span></div>
<div class="sp" style="left:574.4px;width:177.6px"></div><div class="sp" style="left:754px;width:52px"></div>
<div class="t st" style="left:576.3px;top:423.8px">通信状态<span class="l2">:COM_TR18:</span>成功<span class="l2"> COM_8902F1:</span>成功</div><div class="t st" style="left:755.6px;top:423.8px">用户<span class="l2">:</span>系统管理</div>
<div id="taskbar" class="abs"></div><div id="start" class="abs"></div><div id="tray" class="abs"></div>
<svg class="abs" style="left:6.600px;top:434.200px" width="12" height="11" viewBox="0 0 12 11"><path d="M1.300 1.500Q3.300 .2 5.300 1.500L4.600 5Q2.700 3.900 .6 5Z" fill="#f2502a"/><path d="M6.200 1.800Q8.400 3 10.800 1.700L10 5.200Q7.700 6.400 5.500 5.300Z" fill="#72c83c"/><path d="M.4 6Q2.500 4.900 4.400 6L3.700 9.500Q1.700 8.400 -.3 9.500Z" fill="#4084f0"/><path d="M5.300 6.300Q7.500 7.500 9.800 6.300L9.100 9.800Q6.800 11 4.600 9.800Z" fill="#fad02c"/></svg>
<div class="t hei" style="left:22.600px;top:434.400px;font-size:10.300px;font-style:italic;font-weight:400;color:#fff;text-shadow:.6px .8px .8px #1f4a1f;letter-spacing:.5px">开始</div>
<svg class="abs" style="left:62px;top:434px" width="42" height="12" viewBox="62 434 42 12"><path d="M65.500 440.500H71.500A3.100 3.300 0 1 0 70.600 442.700" fill="none" stroke="#4ab6f6" stroke-width="1.800"/><path d="M64.600 443Q65 438 71.800 436.800" fill="none" stroke="#9ad8ff" stroke-width=".6"/><circle cx="81.800" cy="440.200" r="3.900" fill="#f0efe0" stroke="#c8d0e0" stroke-width=".5"/><circle cx="82.400" cy="440" r="1.900" fill="#4a90e0"/><path d="M79 438.500Q78.400 440.500 79.400 442.300" stroke="#e8d890" stroke-width="1" fill="none"/><circle cx="85.600" cy="439" r=".8" fill="#d8402a"/><rect x="92" y="436.200" width="8" height="7.800" rx=".8" fill="#2aa0ee"/><rect x="91.400" y="436" width="4" height="6" fill="#10205a"/><rect x="94.600" y="441.400" width="5" height="2.600" fill="#e8f6ff"/><rect x="92.400" y="435.600" width="2.600" height="1.200" fill="#e8c020"/></svg>
<div class="tb" style="left:107.5px;width:90.5px"></div><div class="tb" style="left:199.5px;width:92px"></div><div class="tb tba" style="left:293.2px;width:93.6px"></div>
<div class="abs" style="left:111.2px;top:436.4px;width:8.4px;height:6.6px;background:#fff;border:.6px solid #8fb0e8;border-radius:.6px"></div>
<svg class="abs" style="left:205px;top:434.5px" width="10" height="10" viewBox="0 0 10 10"><rect x="1" y="1" width="4.6" height="3.8" fill="#bfe0ff" stroke="#2a5a9a" stroke-width=".6"/><rect x="4.2" y="4.4" width="4.8" height="3.8" fill="#8fd0a0" stroke="#2a5a6a" stroke-width=".6"/><path d="M1 8h3" stroke="#e8e8e8" stroke-width=".8"/></svg>
<svg class="abs" style="left:300px;top:434.8px" width="10" height="10" viewBox="0 0 10 10"><circle cx="3.3" cy="3.4" r="2.1" fill="#eee" stroke="#444" stroke-width="1"/><circle cx="6.4" cy="6" r="2.2" fill="#d8d420" stroke="#4a4a10" stroke-width="1"/><circle cx="6.4" cy="6" r=".8" fill="#fff"/></svg>
<div class="t tt" style="left:123.6px;top:436.6px;letter-spacing:.1px">拨号连接</div><div class="t tt" style="left:218px;top:436.6px">电机综合性能测试 . . .</div><div class="t tt" style="left:312px;top:436.6px">三相交流电机测试 . . .</div>
<svg class="abs" style="left:702px;top:436px" width="12" height="8" viewBox="0 0 12 8"><rect x=".6" y=".8" width="10.4" height="6" rx="1" fill="#e6ecf8" stroke="#8a98b8" stroke-width=".6"/><rect x="2" y="2.4" width="7.6" height="1.2" fill="#55618a"/><rect x="2" y="4.6" width="7.6" height=".9" fill="#55618a"/></svg>
<svg class="abs" style="left:729px;top:434px" width="44" height="12" viewBox="729 434 44 12"><circle cx="734" cy="440" r="3.4" fill="#9aa6b8" stroke="#e8ecf4" stroke-width=".7"/><path d="M731.5 443.5l5-7" stroke="#444" stroke-width=".9"/><rect x="741" y="436.4" width="5.4" height="4.4" fill="#cfe4ff" stroke="#445" stroke-width=".5"/><rect x="743.6" y="439.6" width="5" height="4" fill="#9fd0a8" stroke="#345" stroke-width=".5"/><path d="M752.4 435.6h7v4.6q0 3-3.5 4.6q-3.5-1.6-3.500-4.600Z" fill="#f4f4f4" stroke="#2a8a3a" stroke-width=".6"/><path d="M754 437.200h3.800v2.800q0 1.800-1.900 2.800q-1.900-1-1.900-2.800Z" fill="#3aa84a"/><circle cx="766.2" cy="440" r="4" fill="#f2d21c" stroke="#b89a10" stroke-width=".5"/><path d="M766.2 437.600v4.800M763.800 440h4.800" stroke="#1a7a2a" stroke-width="1.500"/></svg>
<div class="t tt" style="left:775.4px;top:436.6px;font-size:6.6px;letter-spacing:.35px">12:51</div>
<div class="abs" style="left:745.6px;top:364.6px;width:54px;height:22.4px;border-radius:11.2px;background:linear-gradient(#fefefe,#f4f4f4 55%,#e2e2e2);box-shadow:0 .5px 2px #8a8878"></div>
<svg class="abs" style="left:746px;top:365px" width="54" height="22" viewBox="746 365 54 22"><defs><clipPath id="cc"><circle cx="757.2" cy="376" r="9.1"/></clipPath></defs><circle cx="757.2" cy="376" r="9.6" fill="#f6f6f6" stroke="#cfcfcf" stroke-width=".8"/><rect x="746" y="380.5" width="23" height="7" fill="#80d048" clip-path="url(#cc)"/><path d="M771.1 374v-2.600" stroke="#f08a1e" stroke-width="1.2" fill="none"/><path d="M769.3 371.900l1.800-2.300 1.800 2.300Z" fill="#f08a1e"/><path d="M771.1 378.200v2" stroke="#2aa63a" stroke-width="1.2" fill="none"/><path d="M769.3 380l1.800 2.300 1.800-2.300Z" fill="#2aa63a"/></svg>
<div class="t hei" style="left:751.8px;top:374px;font-size:5.4px;font-weight:700;color:#8a4a3a">19%</div>
<div class="t hei" style="left:782px;top:369.6px;font-size:5.6px;color:#222">0K/S</div><div class="t hei" style="left:782px;top:378.5px;font-size:5.6px;color:#222">0K/S</div>
</body>
</html>
